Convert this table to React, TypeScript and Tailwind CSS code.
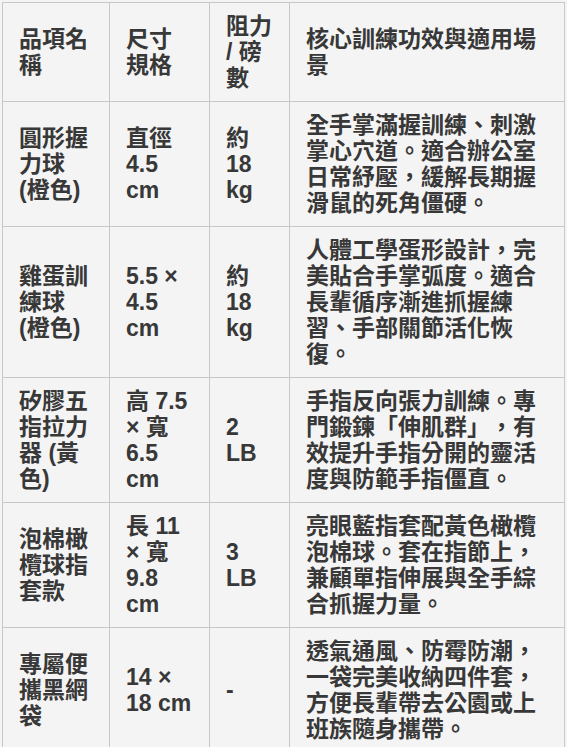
import React from "react";

type Row = {
  name: string;
  size: string;
  force: string;
  effect: string;
};

const rows: Row[] = [
  {
    name: "圓形握力球 (橙色)",
    size: "直徑 4.5 cm",
    force: "約 18 kg",
    effect: "全手掌滿握訓練、刺激掌心穴道。適合辦公室日常紓壓，緩解長期握滑鼠的死角僵硬。",
  },
  {
    name: "雞蛋訓練球 (橙色)",
    size: "5.5 × 4.5 cm",
    force: "約 18 kg",
    effect: "人體工學蛋形設計，完美貼合手掌弧度。適合長輩循序漸進抓握練習、手部關節活化恢復。",
  },
  {
    name: "矽膠五指拉力器 (黃色)",
    size: "高 7.5 × 寬 6.5 cm",
    force: "2 LB",
    effect: "手指反向張力訓練。專門鍛鍊「伸肌群」，有效提升手指分開的靈活度與防範手指僵直。",
  },
  {
    name: "泡棉橄欖球指套款",
    size: "長 11 × 寬 9.8 cm",
    force: "3 LB",
    effect: "亮眼藍指套配黃色橄欖泡棉球。套在指節上，兼顧單指伸展與全手綜合抓握力量。",
  },
  {
    name: "專屬便攜黑網袋",
    size: "14 × 18 cm",
    force: "-",
    effect: "透氣通風、防霉防潮，一袋完美收納四件套，方便長輩帶去公園或上班族隨身攜帶。",
  },
];

const cell = "border border-[#c8c8c8] px-4 py-[10px] align-middle text-left break-words";

export default function App() {
  return (
    <div
      className="min-h-screen bg-[#f4f4f4] p-[2px] text-[#383838] [text-spacing-trim:space-all]"
      style={{ fontFamily: '"Liberation Sans", "Noto Sans CJK TC", sans-serif' }}
    >
      <table className="w-[562px] table-fixed border-collapse text-[23px] leading-[26px] font-bold">
        <colgroup>
          <col className="w-[107px]" />
          <col className="w-[100px]" />
          <col className="w-[80px]" />
          <col className="w-[275px]" />
        </colgroup>
        <thead>
          <tr>
            <th className={`${cell} font-bold`}>品項名稱</th>
            <th className={`${cell} font-bold`}>尺寸規格</th>
            <th className={`${cell} font-bold`}>阻力 / 磅數</th>
            <th className={`${cell} font-bold`}>核心訓練功效與適用場景</th>
          </tr>
        </thead>
        <tbody>
          {rows.map((r) => (
            <tr key={r.name}>
              <td className={cell}>{r.name}</td>
              <td className={cell}>{r.size}</td>
              <td className={cell}>{r.force}</td>
              <td className={cell}>{r.effect}</td>
            </tr>
          ))}
        </tbody>
      </table>
    </div>
  );
}
